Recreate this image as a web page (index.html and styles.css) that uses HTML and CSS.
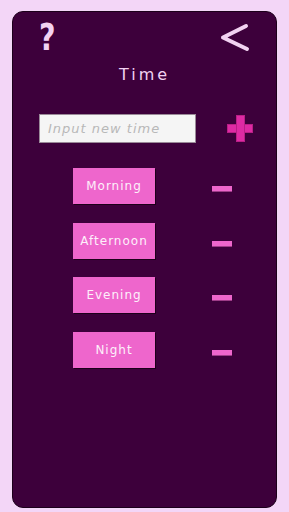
FILE: index.html
```html
<html>
<head>
<meta charset="utf-8">
<title>Time</title>
<link rel="stylesheet" href="styles.css">
</head>
<body>
<div class="card">
  <div class="top">
    <span class="help">?</span>
    <svg class="back" width="30" height="30" viewBox="0 0 30 30">
      <polyline points="26,4 3,15.5 27,27" fill="none" stroke="#f2d2f2" stroke-width="4" stroke-linecap="round" stroke-linejoin="round"/>
    </svg>
  </div>

  <h1 class="title">Time</h1>

  <div class="add">
    <input class="newtime" type="text" placeholder="Input new time">
    <span class="plus"><span class="plus-h"></span><span class="plus-v"></span></span>
  </div>

  <div class="list">
    <div class="row"><span class="slot">Morning</span><span class="minus"></span></div>
    <div class="row"><span class="slot">Afternoon</span><span class="minus"></span></div>
    <div class="row"><span class="slot">Evening</span><span class="minus"></span></div>
    <div class="row"><span class="slot">Night</span><span class="minus"></span></div>
  </div>
</div>
</body>
</html>
```

FILE: styles.css
```css
body {
	margin: 0;
	background: #f3d6f7;
	font-family: "DejaVu Sans", sans-serif;
}
.card {
	box-sizing: border-box;
	margin: 11px 0 0 12px;
	width: 265px;
	height: 497px;
	background: #3d003b;
	border: 1px solid #1c001a;
	border-radius: 11px;
}
.top {
	display: flex;
	justify-content: space-between;
	align-items: flex-start;
	height: 38px;
	padding: 6px 26px 0 26px;
}
.help {
	display: inline-block;
	font-family: "DejaVu Sans", sans-serif;
	font-weight: bold;
	font-size: 38px;
	line-height: 38px;
	color: #f2d2f2;
	transform: scaleX(0.75);
	transform-origin: left center;
}
.back { margin-top: 4px; }
.title {
	margin: 9px 0 0 0;
	text-align: center;
	font-weight: normal;
	font-size: 16px;
	line-height: 20px;
	letter-spacing: 3px;
	color: #f2d2f2;
}
.add {
	display: flex;
	align-items: center;
	margin-top: 29px;
	padding-left: 26px;
	height: 29px;
}
.newtime {
	box-sizing: border-box;
	width: 157px;
	height: 29px;
	margin: 0;
	padding: 0 8px;
	background: #f5f5f5;
	border: 1px solid #9a8a98;
	font-family: "DejaVu Sans", sans-serif;
	font-style: italic;
	font-size: 13px;
}
.newtime::placeholder {
	color: #b8b8b8;
	letter-spacing: 1px;
}
.plus {
	position: relative;
	width: 26px;
	height: 27px;
	margin-left: 31px;
}
.plus-h, .plus-v {
	position: absolute;
	background: #de2aa4;
	box-shadow: inset 0 0 0 1px #b81f86;
}
.plus-h { left: 0; top: 9px; width: 26px; height: 9px; }
.plus-v { left: 8.5px; top: 0; width: 9px; height: 27px; }
.list {
	display: flex;
	flex-direction: column;
	gap: 18.5px;
	margin-top: 25px;
	padding-left: 60px;
}
.row {
	display: flex;
	align-items: flex-start;
	height: 36px;
}
.slot {
	box-sizing: border-box;
	width: 82px;
	height: 36px;
	display: flex;
	align-items: center;
	justify-content: center;
	background: #ee66cc;
	box-shadow: 1px 1px 0 #1c001a;
	color: #fdf0fa;
	font-size: 12px;
	letter-spacing: 1px;
}
.minus {
	width: 20px;
	height: 5px;
	margin: 18px 0 0 57px;
	background: #ee66cc;
	box-shadow: 0 1px 0 #9e3c88;
}
```
